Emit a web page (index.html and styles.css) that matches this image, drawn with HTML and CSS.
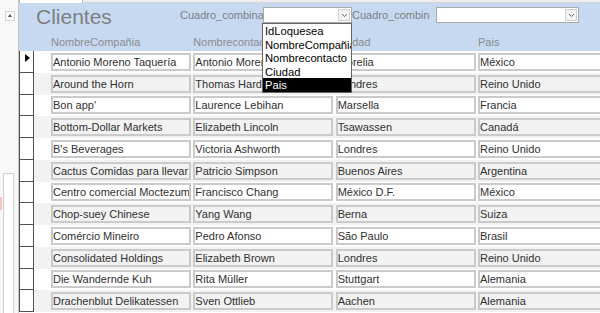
FILE: index.html
```html
<!DOCTYPE html>
<html>
<head lang="es">
    <meta charset="UTF-8">
    <title>Clientes</title>
    <link rel="stylesheet" href="styles.css">
</head>
<body>
<div class="app">
    <div class="side">
        <div class="scroll-up"><span class="up-arrow"></span></div>
        <div class="thumb"></div>
        <div class="mark"></div>
    </div>
    <div class="form">
        <div class="tabs"><div class="tab"></div></div>
        <div class="header">
            <div class="title-row">
                <div class="title">Clientes</div>
                <div class="combo-label l1">Cuadro_combinado1</div>
                <div class="combo c1">
                    <span class="arrow"><svg width="7" height="5" viewBox="0 0 7 5"><path d="M1 1 L3.5 3.5 L6 1" fill="none" stroke="#6d6d6d" stroke-width="1"/></svg></span>
                </div>
                <div class="combo-label l2">Cuadro_combinado2</div>
                <div class="combo c2">
                    <span class="arrow"><svg width="7" height="5" viewBox="0 0 7 5"><path d="M1 1 L3.5 3.5 L6 1" fill="none" stroke="#6d6d6d" stroke-width="1"/></svg></span>
                </div>
            </div>
            <div class="labels">
                <div class="col-label">NombreCompañia</div>
                <div class="col-label">Nombrecontacto</div>
                <div class="col-label">Ciudad</div>
                <div class="col-label">Pais</div>
            </div>
            <ul class="dropdown">
                <li>IdLoquesea</li>
                <li>NombreCompañia</li>
                <li>Nombrecontacto</li>
                <li>Ciudad</li>
                <li class="select">Pais</li>
            </ul>
        </div>
        <div class="rows">
            <div class="row"><div class="sel current"><span class="pointer"></span></div><div class="box">Antonio Moreno Taquería</div><div class="box">Antonio Moreno</div><div class="box">Morelia</div><div class="box">México</div></div>
            <div class="row"><div class="sel"></div><div class="box">Around the Horn</div><div class="box">Thomas Hardy</div><div class="box">Londres</div><div class="box">Reino Unido</div></div>
            <div class="row"><div class="sel"></div><div class="box">Bon app'</div><div class="box">Laurence Lebihan</div><div class="box">Marsella</div><div class="box">Francia</div></div>
            <div class="row"><div class="sel"></div><div class="box">Bottom-Dollar Markets</div><div class="box">Elizabeth Lincoln</div><div class="box">Tsawassen</div><div class="box">Canadá</div></div>
            <div class="row"><div class="sel"></div><div class="box">B's Beverages</div><div class="box">Victoria Ashworth</div><div class="box">Londres</div><div class="box">Reino Unido</div></div>
            <div class="row"><div class="sel"></div><div class="box">Cactus Comidas para llevar</div><div class="box">Patricio Simpson</div><div class="box">Buenos Aires</div><div class="box">Argentina</div></div>
            <div class="row"><div class="sel"></div><div class="box">Centro comercial Moctezuma</div><div class="box">Francisco Chang</div><div class="box">México D.F.</div><div class="box">México</div></div>
            <div class="row"><div class="sel"></div><div class="box">Chop-suey Chinese</div><div class="box">Yang Wang</div><div class="box">Berna</div><div class="box">Suiza</div></div>
            <div class="row"><div class="sel"></div><div class="box">Comércio Mineiro</div><div class="box">Pedro Afonso</div><div class="box">São Paulo</div><div class="box">Brasil</div></div>
            <div class="row"><div class="sel"></div><div class="box">Consolidated Holdings</div><div class="box">Elizabeth Brown</div><div class="box">Londres</div><div class="box">Reino Unido</div></div>
            <div class="row"><div class="sel"></div><div class="box">Die Wandernde Kuh</div><div class="box">Rita Müller</div><div class="box">Stuttgart</div><div class="box">Alemania</div></div>
            <div class="row"><div class="sel"></div><div class="box">Drachenblut Delikatessen</div><div class="box">Sven Ottlieb</div><div class="box">Aachen</div><div class="box">Alemania</div></div>
        </div>
    </div>
</div>
</body>
</html>
```
FILE: styles.css
```css
* {
    margin: 0;
    padding: 0;
    box-sizing: border-box;
}
body {
    width: 600px;
    height: 313px;
    overflow: hidden;
    font-family: "Liberation Sans", Arial, sans-serif;
    background: #fff;
}
ul {
    list-style: none;
}
.app {
    display: flex;
    height: 313px;
}

/* left pane */
.side {
    width: 19px;
    flex: none;
    position: relative;
    background: #f8f8f8;
    border-right: 1px solid #c8c8c8;
}
.scroll-up {
    position: absolute;
    left: 5px;
    top: 11px;
    width: 10px;
    height: 10px;
    border: 1px solid #d4d4d4;
    background: #fafafa;
}
.up-arrow {
    position: absolute;
    left: 2px;
    top: 2px;
    border-left: 2px solid transparent;
    border-right: 2px solid transparent;
    border-bottom: 3px solid #555;
}
.thumb {
    position: absolute;
    left: 3px;
    top: 173px;
    width: 11px;
    height: 150px;
    background: #fff;
    border: 1px solid #cfcfcf;
}
.mark {
    position: absolute;
    left: 0;
    top: 197px;
    width: 2px;
    height: 13px;
    background: #f3c4c4;
}

/* form */
.form {
    flex: 1;
    min-width: 0;
    position: relative;
    overflow: hidden;
}
.tabs {
    height: 3px;
    background: #ededed;
    border-bottom: 1px solid #d6d6d6;
}
.tab {
    width: 64px;
    height: 3px;
    background: #fff;
    border-left: 1px solid #b8b8b8;
    border-right: 1px solid #b8b8b8;
}
.header {
    position: relative;
    height: 48px;
    background: #c6d9f1;
    color: #8a8a8a;
}
.title-row {
    display: flex;
    height: 27px;
    padding-top: 4px;
    font-size: 11px;
}
.title {
    width: 161px;
    flex: none;
    padding-left: 17px;
    margin-top: -1px;
    font-size: 21px;
    line-height: 22px;
    color: #7f7f7f;
}
.combo-label {
    flex: none;
    overflow: hidden;
    white-space: nowrap;
    line-height: 16px;
    color: #7f7f7f;
}
.l1 {
    width: 83px;
}
.l2 {
    width: 78px;
    margin-right: 6px;
}
.combo {
    position: relative;
    flex: none;
    height: 16px;
    background: #fff;
    border: 1px solid #a9a9a9;
}
.c1 {
    width: 89px;
}
.c2 {
    width: 143px;
}
.arrow {
    position: absolute;
    right: 1px;
    top: 1px;
    width: 12px;
    height: 12px;
    background: #f2f2f2;
    border: 1px solid #d0d0d0;
    display: flex;
    align-items: center;
    justify-content: center;
}
.labels {
    display: flex;
    gap: 2.33px;
    padding-left: 31px;
    padding-top: 6px;
    font-size: 11px;
}
.col-label {
    width: 140px;
    flex: none;
    padding-left: 1px;
    color: #8c8c8c;
}

/* combo list */
.dropdown {
    position: absolute;
    left: 243px;
    top: 20px;
    width: 90px;
    height: 70px;
    background: #fff;
    border: 1px solid #646464;
    font-size: 11.2px;
    color: #000;
    z-index: 2;
}
.dropdown li {
    height: 13.6px;
    line-height: 14px;
    padding-left: 2px;
    white-space: nowrap;
    overflow: hidden;
}
.dropdown .select {
    background: #000;
    color: #fff;
}

/* records */
.row {
    display: flex;
    align-items: center;
    gap: 2.33px;
    height: 21.75px;
}
.row:nth-child(even) {
    background: #f2f2f2;
}
.sel {
    width: 15px;
    flex: none;
    height: 100%;
    margin-right: 14.67px;
    position: relative;
    background: #fff;
    border-left: 1px solid #505050;
    border-right: 1px solid #505050;
    border-bottom: 1px solid #505050;
}
.pointer {
    position: absolute;
    left: 5px;
    top: 3px;
    border-top: 4px solid transparent;
    border-bottom: 4px solid transparent;
    border-left: 5px solid #000;
}
.box {
    width: 140px;
    flex: none;
    height: 18px;
    padding-left: 0;
    border: 2px solid #cacaca;
    font-size: 11px;
    line-height: 14px;
    color: #303030;
    white-space: nowrap;
    overflow: hidden;
}
```
